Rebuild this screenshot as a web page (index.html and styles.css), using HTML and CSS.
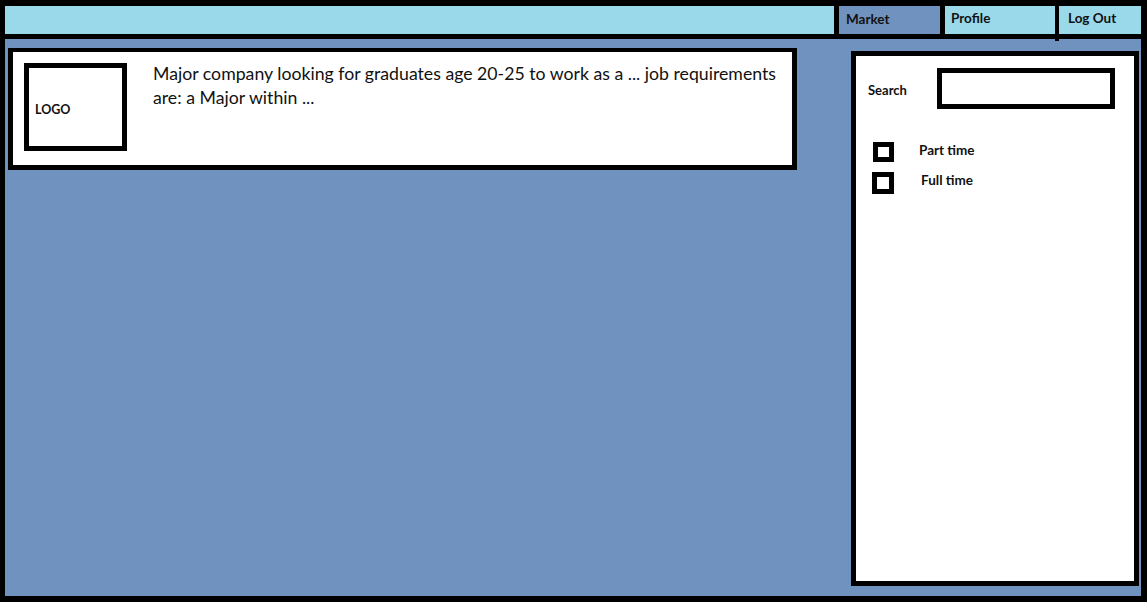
FILE: index.html
```html
<!DOCTYPE html>
<html lang="en">
<head>
<meta charset="utf-8">
<title>Market</title>
<link rel="stylesheet" href="styles.css">
</head>
<body>
<div class="frame">
  <header class="topbar">
    <nav class="tabs">
      <a class="tab tab-market active">Market</a>
      <a class="tab tab-profile">Profile</a>
      <a class="tab tab-logout">Log Out</a>
    </nav>
  </header>
  <main class="main">
    <section class="card">
      <div class="logo">LOGO</div>
      <p class="desc">Major company looking for graduates age 20-25 to work as a ... job requirements are: a Major within ...</p>
    </section>
    <aside class="sidebar">
      <div class="search-row">
        <span class="search-label">Search</span>
        <div class="search-box"></div>
      </div>
      <ul class="filters">
        <li class="filter"><span class="check"></span><span class="filter-label">Part time</span></li>
        <li class="filter filter-full"><span class="check check-lg"></span><span class="filter-label">Full time</span></li>
      </ul>
    </aside>
  </main>
</div>
</body>
</html>
```
FILE: styles.css
```css
* { box-sizing: border-box; }
html, body { margin: 0; padding: 0; }
body {
  width: 1147px;
  height: 602px;
  overflow: hidden;
  font-family: Lato, "Open Sans", "Liberation Sans", sans-serif;
  color: #111;
  background: #000;
}
.frame {
  width: 1147px;
  height: 602px;
  border-style: solid;
  border-color: #000;
  border-width: 6px 6px 6px 5px;
  display: flex;
  flex-direction: column;
  background: #000;
}
.topbar {
  height: 33px;
  flex: none;
  background: #99d9ea;
  border-bottom: 5px solid #000;
  display: flex;
  justify-content: flex-end;
}
.tabs {
  display: flex;
  height: 28px;
}
.tab {
  display: flex;
  align-items: center;
  height: 28px;
  font-weight: 700;
  font-size: 13.5px;
  border-left: 5px solid #000;
  color: #111;
  padding-bottom: 4px;
}
.tab-market { width: 106px; padding-left: 7px; background: #7092be; padding-bottom: 2px; }
.tab-profile { width: 115px; padding-left: 6px; }
.tab-logout { width: 86px; padding-left: 9px; border-left-width: 4px; position: relative; }
.tab-logout::before {
  content: "";
  position: absolute;
  left: -4px;
  top: 28px;
  width: 4px;
  height: 7px;
  background: #000;
}
.main {
  flex: 1;
  background: #7092be;
  display: flex;
  align-items: flex-start;
  padding: 9px 2px 0 3px;
}
.card {
  width: 789px;
  height: 122px;
  background: #fff;
  border: 5px solid #000;
  border-top-width: 4px;
  display: flex;
  align-items: flex-start;
  padding: 11px;
}
.logo {
  width: 103px;
  height: 88px;
  flex: none;
  border: 5px solid #000;
  display: flex;
  align-items: center;
  padding: 4px 0 0 6px;
  font-weight: 700;
  font-size: 12.5px;
}
.desc {
  margin: -1px 0 0 26px;
  font-size: 17.7px;
  line-height: 24px;
  color: #111;
}
.sidebar {
  margin-left: auto;
  margin-top: 3px;
  width: 288px;
  height: 535px;
  background: #fff;
  border: 5px solid #000;
  padding: 12px 0 0 12px;
}
.search-row {
  display: flex;
  align-items: center;
}
.search-label {
  width: 69px;
  font-weight: 700;
  font-size: 13px;
  padding-top: 2px;
}
.search-box {
  width: 178px;
  height: 41px;
  border: 5px solid #000;
}
.filters {
  list-style: none;
  margin: 32px 0 0 5px;
  padding: 0;
  display: flex;
  flex-direction: column;
  gap: 10px;
}
.filter {
  display: flex;
  align-items: center;
  height: 21px;
}
.check {
  width: 21px;
  height: 20px;
  border: 5px solid #000;
  flex: none;
}
.check-lg { width: 22px; height: 22px; margin-left: -1px; }
.filter-label {
  margin-left: 25px;
  font-weight: 700;
  font-size: 13.5px;
  padding-bottom: 4px;
}
.filter-full .filter-label { margin-left: 27px; padding-bottom: 6px; }
```
